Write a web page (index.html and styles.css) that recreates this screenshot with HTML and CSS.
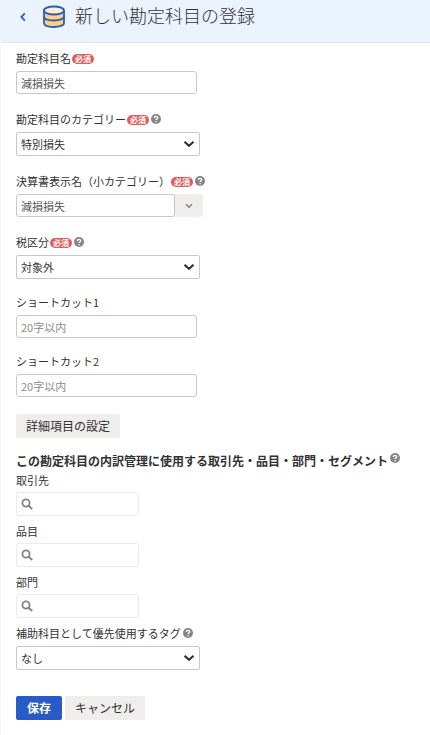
FILE: index.html
```html
<!DOCTYPE html>
<html lang="ja">
<head>
    <meta charset="UTF-8">
    <meta name="viewport" content="width=device-width, initial-scale=1.0">
    <link rel="stylesheet" href="styles.css">
    <title>新しい勘定科目の登録</title>
</head>
<body>
    <svg class="symbols" aria-hidden="true">
        <symbol id="icon-help" viewBox="0 0 10 10">
            <circle cx="5" cy="5" r="5" fill="#858585"/>
            <path d="M3.3 3.9C3.4 1.9 6.7 1.9 6.7 3.8C6.7 4.9 5.1 4.8 5.1 6" fill="none" stroke="#fff" stroke-width="1.4"/>
            <circle cx="5.1" cy="7.7" r=".8" fill="#fff"/>
        </symbol>
        <symbol id="icon-search" viewBox="0 0 12 12">
            <circle cx="5" cy="5" r="3.6" fill="none" stroke="#858585" stroke-width="1.8"/>
            <path d="M7.7 7.7L10.6 10.4" stroke="#858585" stroke-width="2" stroke-linecap="round"/>
        </symbol>
        <symbol id="icon-arrow" viewBox="0 0 12 8">
            <path d="M1.5 1.7L6 5.7L10.5 1.7" fill="none" stroke="#323232" stroke-width="2.2"/>
        </symbol>
    </svg>

    <header class="header">
        <a class="back" href="#" aria-label="戻る">
            <svg width="6" height="10" viewBox="0 0 6 10"><path d="M4.8 1.4L1.4 5L4.8 8.6" fill="none" stroke="#285ac8" stroke-width="1.8"/></svg>
        </a>
        <svg class="logo" width="24" height="24" viewBox="0 0 24 24" fill="none" stroke="#285ac8" stroke-width="1.8">
            <path d="M2 5.5V18C2 20.5 6.5 22 12 22S22 20.5 22 18V5.5" fill="#ffd17a"/>
            <ellipse cx="12" cy="5.5" rx="10" ry="4" fill="#ffedcb"/>
            <path d="M2 11.5C2 14 6.5 15.5 12 15.5S22 14 22 11.5"/>
        </svg>
        <h1 class="title">新しい勘定科目の登録</h1>
    </header>

    <form class="form">
        <div class="field">
            <div class="label-row">
                <label for="name">勘定科目名</label><span class="required">必須</span>
            </div>
            <input class="input" id="name" type="text" value="減損損失">
        </div>

        <div class="field">
            <div class="label-row">
                <label for="category">勘定科目のカテゴリー</label><span class="required">必須</span>
                <svg class="help"><use href="#icon-help"/></svg>
            </div>
            <div class="select-box">
                <select class="select" id="category"><option>特別損失</option></select>
                <svg class="arrow"><use href="#icon-arrow"/></svg>
            </div>
        </div>

        <div class="field">
            <div class="label-row">
                <label for="sub-category">決算書表示名（小カテゴリー）</label><span class="required">必須</span>
                <svg class="help"><use href="#icon-help"/></svg>
            </div>
            <div class="combo">
                <input class="input combo-input" id="sub-category" type="text" value="減損損失">
                <button class="combo-button" type="button" aria-label="候補を開く">
                    <svg width="8" height="6" viewBox="0 0 8 6"><path d="M1 1.2L4 4.2L7 1.2" fill="none" stroke="#94776f" stroke-width="1.4"/></svg>
                </button>
            </div>
        </div>

        <div class="field short">
            <div class="label-row">
                <label for="tax">税区分</label><span class="required">必須</span>
                <svg class="help"><use href="#icon-help"/></svg>
            </div>
            <div class="select-box">
                <select class="select" id="tax"><option>対象外</option></select>
                <svg class="arrow"><use href="#icon-arrow"/></svg>
            </div>
        </div>

        <div class="field short">
            <div class="label-row">
                <label for="shortcut1">ショートカット1</label>
            </div>
            <input class="input" id="shortcut1" type="text" placeholder="20字以内">
        </div>

        <div class="field">
            <div class="label-row">
                <label for="shortcut2">ショートカット2</label>
            </div>
            <input class="input" id="shortcut2" type="text" placeholder="20字以内">
        </div>

        <button class="button" type="button">詳細項目の設定</button>

        <h2 class="section-title">
            この勘定科目の内訳管理に使用する取引先・品目・部門・セグメント
            <svg class="help"><use href="#icon-help"/></svg>
        </h2>

        <div class="tag-field">
            <label for="partner">取引先</label>
            <div class="search">
                <svg class="search-icon"><use href="#icon-search"/></svg>
                <input class="search-input" id="partner" type="text">
            </div>
        </div>
        <div class="tag-field">
            <label for="item">品目</label>
            <div class="search">
                <svg class="search-icon"><use href="#icon-search"/></svg>
                <input class="search-input" id="item" type="text">
            </div>
        </div>
        <div class="tag-field">
            <label for="section">部門</label>
            <div class="search">
                <svg class="search-icon"><use href="#icon-search"/></svg>
                <input class="search-input" id="section" type="text">
            </div>
        </div>

        <div class="field">
            <div class="label-row">
                <label for="tag">補助科目として優先使用するタグ</label>
                <svg class="help"><use href="#icon-help"/></svg>
            </div>
            <div class="select-box">
                <select class="select" id="tag"><option>なし</option></select>
                <svg class="arrow"><use href="#icon-arrow"/></svg>
            </div>
        </div>

        <div class="actions">
            <button class="button primary" type="submit">保存</button>
            <button class="button" type="button">キャンセル</button>
        </div>
    </form>
</body>
</html>
```
FILE: styles.css
```css
* {
    box-sizing: border-box;
}

body {
    min-height: 100vh;
    margin: 0;
    background: #fff;
    border-left: 1px solid #f5f5f5;
    color: #323232;
    font-family: "Noto Sans CJK JP", sans-serif;
    font-size: 11px;
    line-height: 16px;
}

input,
select,
button {
    font: inherit;
    color: inherit;
}

.symbols {
    position: absolute;
    width: 0;
    height: 0;
}

.header {
    display: flex;
    align-items: flex-start;
    padding: 0 19px 12px;
    background: #ebf3ff;
    border-bottom: 1px solid #e6e6e6;
}

.back {
    display: flex;
    padding-top: 12px;
}

.logo {
    margin: 5px 9px 0 16px;
}

.title {
    margin: 0;
    font-size: 18px;
    font-weight: 300;
    line-height: 30px;
}

.form {
    padding: 7px 15px 8px;
}

.field {
    margin-bottom: 17px;
}

.field.short {
    margin-bottom: 15px;
}

.label-row {
    display: flex;
    align-items: center;
    height: 16px;
    margin-bottom: 5px;
}

.required {
    margin: 2px 0 0 1px;
    padding: 0 3px;
    border-radius: 5px;
    background: #e35b5b;
    color: #fff;
    font-size: 8px;
    font-weight: 700;
    line-height: 10px;
}

.help {
    flex: none;
    width: 10px;
    height: 10px;
    margin-left: 2px;
}

.input {
    display: block;
    width: 181px;
    max-width: 100%;
    height: 23px;
    padding: 0 4px;
    border: 1px solid #c8c8c8;
    border-radius: 3px;
    background: #fff;
    color: #555;
}

.input::placeholder {
    color: #8c8c8c;
}

.select-box {
    display: grid;
    align-items: center;
    width: 184px;
    max-width: 100%;
}

.select {
    grid-area: 1 / 1;
    width: 100%;
    height: 24px;
    padding: 0 4px;
    border: 1px solid #c8c8c8;
    border-radius: 2px;
    background: #fff;
    appearance: none;
}

.arrow {
    grid-area: 1 / 1;
    justify-self: end;
    width: 12px;
    height: 8px;
    margin-right: 5px;
    pointer-events: none;
}

.combo {
    display: flex;
    width: 187px;
    max-width: 100%;
    border-radius: 3px;
    background: #f0eeec;
}

.combo-input {
    flex: 1;
    min-width: 0;
}

.combo-button {
    width: 28px;
    padding: 0;
    border: 0;
    background: none;
}

.combo-button svg {
    display: block;
    margin: 0 auto;
}

.button {
    height: 24px;
    padding: 0 10px;
    border: 0;
    border-radius: 2px;
    background: #f0eeec;
    font-size: 12px;
}

.primary {
    padding: 0 11px;
    background: #285ac8;
    color: #fff;
    font-weight: 700;
}

.section-title {
    display: flex;
    margin: 15px -8px 3px 0;
    font-size: 12px;
    font-weight: 700;
    line-height: 16px;
}

.tag-field {
    margin-bottom: 7px;
}

.tag-field label {
    display: block;
    margin-bottom: 4px;
}

.search {
    display: flex;
    align-items: center;
    width: 123px;
    max-width: 100%;
    height: 24px;
    padding: 0 4px;
    border: 1px solid #ebebeb;
    border-radius: 3px;
}

.search-icon {
    flex: none;
    width: 12px;
    height: 12px;
}

.search-input {
    flex: 1;
    min-width: 0;
    height: 20px;
    border: 0;
    background: none;
}

.actions {
    display: flex;
    gap: 3px;
    padding-top: 9px;
}
```
